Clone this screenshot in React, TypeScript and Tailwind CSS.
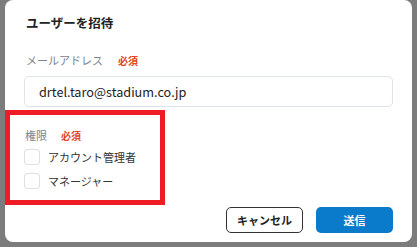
import React from 'react';

const font = { fontFamily: '"Noto Sans CJK JP", "Noto Sans", sans-serif' };

function Checkbox({ label }: { label: string }) {
  return (
    <label className="flex items-center gap-[8px] h-[16px]">
      <span className="w-[16px] h-[16px] rounded-[3px] border border-[#dbe1e8] bg-white shrink-0" />
      <span className="text-[11px] text-[#333] leading-none">{label}</span>
    </label>
  );
}

export default function App() {
  return (
    <div className="relative w-[417px] h-[247px] bg-[#7c7c7c] overflow-hidden" style={font}>
      <div className="ml-[5px] w-[407px] h-[242px] bg-white rounded-lg px-[19px] pt-[14px]">
        <h1 className="text-[12.5px] font-bold text-[#222] leading-[18px] pl-[2px]">ユーザーを招待</h1>

        <div className="mt-[20px] flex items-center gap-[15px] pl-[2px] h-[16px]">
          <span className="text-[11px] text-[#7a8390]">メールアドレス</span>
          <span className="text-[10px] font-bold text-[#e0461c]">必須</span>
        </div>
        <div className="mt-[8px] h-[31px] rounded-[5px] border border-[#dde3ea] flex items-center px-[14px]">
          <span className="text-[12.7px] text-[#222]">drtel.taro@stadium.co.jp</span>
        </div>

        <div className="mt-[20px] flex items-center gap-[14px] pl-[1px] h-[16px]">
          <span className="text-[11px] text-[#7a8390]">権限</span>
          <span className="text-[10px] font-bold text-[#e0461c]">必須</span>
        </div>
        <div className="mt-[6px] flex flex-col gap-[8px]">
          <Checkbox label="アカウント管理者" />
          <Checkbox label="マネージャー" />
        </div>

        <div className="mt-[18px] flex justify-end gap-[13px]">
          <button className="w-[77px] h-[26px] rounded-[5px] border border-[#333] text-[11px] font-bold text-[#222] bg-white">
            キャンセル
          </button>
          <button className="w-[77px] h-[26px] rounded-[5px] bg-[#0a7bcb] text-[11px] font-bold text-white">
            送信
          </button>
        </div>
      </div>

      <div className="absolute left-[5px] top-[110px] w-[160px] h-[95px] border-[5px] border-[#ee1c25]" />
    </div>
  );
}
